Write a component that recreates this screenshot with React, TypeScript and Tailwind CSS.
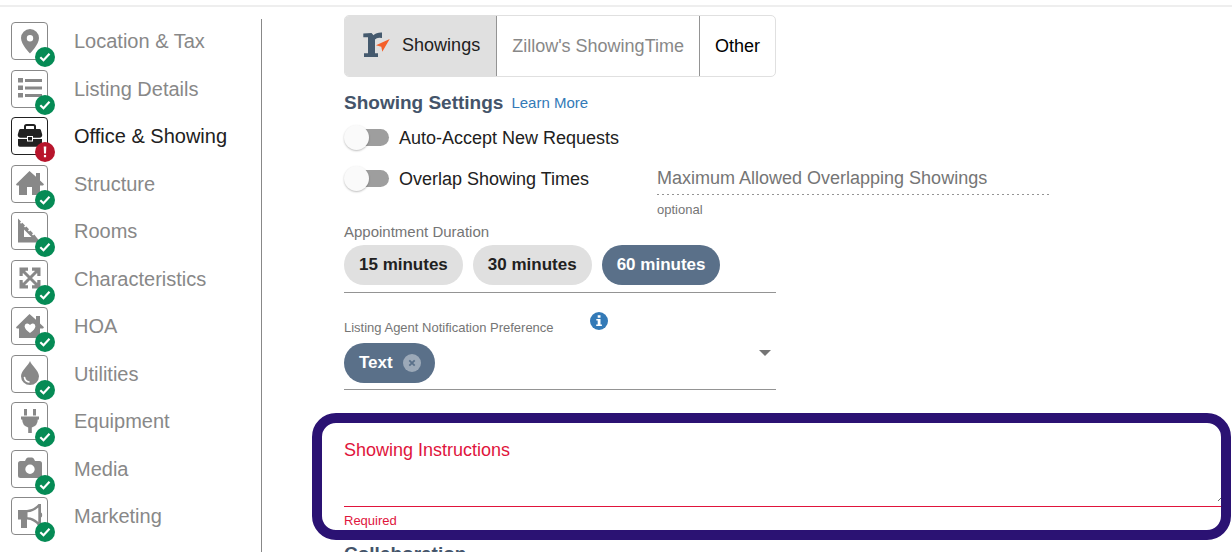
import { useState } from "react";
import type { ReactNode } from "react";

type Status = "done" | "error";

interface Section {
  label: string;
  status: Status;
  icon: ReactNode;
}

const sections: Section[] = [
  {
    label: "Location & Tax",
    status: "done",
    icon: (
      <path
        fillRule="evenodd"
        d="M18 6a9 9 0 0 0-9 9c0 6.5 9 15.5 9 15.5s9-9 9-15.5a9 9 0 0 0-9-9zm0 6a3.2 3.2 0 1 1 0 6.4 3.2 3.2 0 0 1 0-6.4z"
      />
    ),
  },
  {
    label: "Listing Details",
    status: "done",
    icon: (
      <path d="M6 7h5v4.5H6zM13 8h17v3H13zM6 14.5h5V19H6zM13 15.5h17v3H13zM6 22h5v4.5H6zM13 23h17v3H13z" />
    ),
  },
  {
    label: "Office & Showing",
    status: "error",
    icon: (
      <>
        <path d="M13 11V8.5Q13 7 14.5 7h7Q23 7 23 8.5V11" fill="none" stroke="currentColor" strokeWidth="2" />
        <path d="M8.5 11h19q1 0 1.4 1l1.3 4.5q.3 3-2.7 3.2H21V18h-6v1.700H8.500q-3-.2-2.700-3.200L7.100 12q.4-1 1.400-1z" />
        <path d="M16 19h4v3.500h-4z" />
        <path d="M6 21h9v2.500h6V21h9v6q0 1.700-1.700 1.700H7.700Q6 28.700 6 27z" />
      </>
    ),
  },
  {
    label: "Structure",
    status: "done",
    icon: <path d="M17.500 5L24 10.800V7h4v7.500l4 3.700-1 1.300h-3V29h-8v-8h-5v8H7v-9.500H4.800l-.8-1.300z" />,
  },
  {
    label: "Rooms",
    status: "done",
    icon: (
      <path
        fillRule="evenodd"
        d="M6 5.500l3 3-1 1.200 1 1 1.300-1 2.700 2.700-1 1.200 1 1 1.300-1 2.700 2.700-1 1.200 1 1 1.300-1 2.700 2.700-1 1.200 1 1 1.300-1L28.500 29.500H6zM12 16.500V24h7.500z"
      />
    ),
  },
  {
    label: "Characteristics",
    status: "done",
    icon: (
      <>
        <path d="M10 9l16 16M26 9L10 25" stroke="currentColor" strokeWidth="3" />
        <path d="M7.500 6.500H16v3.200h-2.500l-2.800 2.800V15H7.500zM28.500 6.500H20v3.200h2.500l2.800 2.800V15h3.200zM7.500 27.500H16v-3.200h-2.500l-2.800-2.800V19H7.500zM28.500 27.500H20v-3.200h2.500l2.800-2.800V19h3.200z" />
      </>
    ),
  },
  {
    label: "HOA",
    status: "done",
    icon: (
      <path
        fillRule="evenodd"
        d="M17.500 6L24 11.800V8h4v7.500l4 3.700-1 1.300h-3V30H7v-9.500H4.800l-.8-1.300zM18 17q-1.200-1.800-3.200-1.500-2.300.7-2.200 3Q13 21.500 18 25q5-3.500 5.400-6.500.1-2.300-2.200-3Q19.200 15.200 18 17z"
      />
    ),
  },
  {
    label: "Utilities",
    status: "done",
    icon: (
      <>
        <path d="M18 5c1 4 9 9.500 9 15.300a9 8.700 0 0 1-18 0C9 14.500 17 9 18 5z" />
        <path d="M12.500 21.500q.7 4 4.500 4.500" fill="none" stroke="white" strokeWidth="1.600" strokeLinecap="round" />
      </>
    ),
  },
  {
    label: "Equipment",
    status: "done",
    icon: (
      <path d="M12 6h3v6.500h-3zM21 6h3v6.500h-3zM9 13.500h18v3h-1.200q0 6.200-6 8V30h-3.600v-5.500q-6-1.800-6-8H9z" />
    ),
  },
  {
    label: "Media",
    status: "done",
    icon: (
      <path
        fillRule="evenodd"
        d="M8.500 10H13l1-2q.6-1.500 2-1.500h4q1.400 0 2 1.500l1 2h4.500q2.500 0 2.500 2.500v12q0 2.500-2.500 2.500h-19Q6 27 6 24.500v-12Q6 10 8.500 10zM18 13.500a4.700 4.700 0 1 0 0 9.400 4.700 4.700 0 0 0 0-9.400z"
      />
    ),
  },
  {
    label: "Marketing",
    status: "done",
    icon: (
      <path
        fillRule="evenodd"
        d="M6 12h9q7-.5 11.500-6H29v8.500q1.200.3 1.200 2.500T29 19.500V28h-2.500Q22 22 15 21.500V30H9v-8.500H6zM15.500 14.300v5Q21.500 19.500 26.300 24V9.500Q21.500 14 15.500 14.300z"
      />
    ),
  },
];

function StatusBadge({ status }: { status: Status }) {
  return (
    <svg
      viewBox="0 0 20 20"
      aria-hidden="true"
      className={
        status === "done"
          ? "absolute top-6 left-[23px] size-5 text-[#058b55]"
          : "absolute top-6 left-[23px] size-5 text-[#b8152c]"
      }
    >
      <circle cx="10" cy="10" r="10" fill="currentColor" />
      {status === "done" ? (
        <path d="M5.300 10.200l3.200 3 6-6.400" fill="none" stroke="white" strokeWidth="2.200" />
      ) : (
        <path d="M8.700 4.500h2.600L11 11.500H9zM8.900 13h2.200v2.200H8.900z" fill="white" />
      )}
    </svg>
  );
}

function SectionLink({ section, active }: { section: Section; active: boolean }) {
  return (
    <li className="odd:h-12 even:h-[47px]">
      <a
        href="#"
        aria-current={active ? "page" : undefined}
        className={
          active
            ? "flex items-center gap-[26px] text-xl text-[#212121]"
            : "flex items-center gap-[26px] text-xl text-[#888888]"
        }
      >
        <span className="relative h-[38px] w-[37px] shrink-0 rounded border border-current">
          <svg viewBox="0 0 35 36" fill="currentColor" aria-hidden="true" className="h-9 w-[35px]">
            {section.icon}
          </svg>
          <StatusBadge status={section.status} />
        </span>
        {section.label}
      </a>
    </li>
  );
}

function ShowingsLogo() {
  return (
    <svg viewBox="0 0 30 28" aria-hidden="true" className="h-7 w-[30px]">
      <path
        d="M1.300 2.500L9.500 2l2 2.200Q14.500 1.200 20 1.500V7q-5-1.200-7 1.500v13.800h3V26H2v-3.700h4V6.300H1.300z"
        fill="#455a6e"
      />
      <path d="M27.700 8L14 14.300l5.300 1.400 1 5z" fill="#f4602a" />
    </svg>
  );
}

function Toggle({ id, label }: { id: string; label: string }) {
  return (
    <div className="flex h-[41px] items-center gap-2.5">
      <input
        id={id}
        type="checkbox"
        role="switch"
        className="relative ml-1.5 h-[17px] w-[39px] shrink-0 appearance-none rounded-full bg-[#9e9e9e] before:absolute before:-top-1 before:-left-1.5 before:size-[25px] before:rounded-full before:bg-[#fafafa] before:shadow-[0_1px_2px_rgba(0,0,0,0.25)] checked:bg-[#58708a] checked:before:left-5"
      />
      <label htmlFor={id} className="text-lg text-[#212121]">
        {label}
      </label>
    </div>
  );
}

function DurationPicker() {
  const [value, setValue] = useState("60");
  return (
    <fieldset className="w-[432px] max-w-full border-b border-[#949494] pb-[7px]">
      <legend className="h-5 text-[15px] leading-[22px] text-[#757575]">Appointment Duration</legend>
      <div className="mt-1 flex gap-2.5">
        {["15", "30", "60"].map((minutes) => (
          <label
            key={minutes}
            className="relative flex h-10 items-center rounded-full bg-[#e0e0e0] px-[15px] text-[17px] font-bold text-[#212121] has-checked:bg-[#5a7089] has-checked:text-white"
          >
            <input
              type="radio"
              name="duration"
              value={minutes}
              checked={value === minutes}
              onChange={() => setValue(minutes)}
              className="sr-only"
            />
            {minutes} minutes
          </label>
        ))}
      </div>
    </fieldset>
  );
}

function NotificationPreference() {
  return (
    <div className="mt-[19px] w-[432px] max-w-full border-b border-[#949494] pb-1.5">
      <div className="flex items-start gap-9">
        <label htmlFor="notify" className="pt-1.5 text-[13px] leading-5 text-[#757575]">
          Listing Agent Notification Preference
        </label>
        <button type="button" aria-label="About notification preference" className="size-[18px]">
          <svg viewBox="0 0 18 18" aria-hidden="true">
            <circle cx="9" cy="9" r="9" fill="#337ab7" />
            <path d="M7.700 3.300h2.800v2.400H7.700zM6.300 7h4.200v5.500h1.400V14H6.200v-1.500h1.500v-4H6.300z" fill="white" />
          </svg>
        </button>
      </div>
      <div className="mt-[5px] flex">
        <span className="flex h-10 items-center gap-2.5 rounded-full bg-[#5a7089] pr-3.5 pl-[15px] text-[17px] font-bold text-white">
          Text
          <button type="button" aria-label="Remove Text" className="size-[18px]">
            <svg viewBox="0 0 18 18" aria-hidden="true">
              <circle cx="9" cy="9" r="9" fill="#9ca9b8" />
              <path d="M6.300 6.300l5.400 5.400M11.700 6.300l-5.400 5.400" stroke="#5a7089" strokeWidth="1.800" />
            </svg>
          </button>
        </span>
        <div className="relative flex-1">
          <select id="notify" className="h-10 w-full appearance-none bg-transparent" defaultValue="">
            <option value="" />
          </select>
          <svg
            viewBox="0 0 12 6"
            aria-hidden="true"
            className="pointer-events-none absolute top-[7px] right-[5px] h-1.5 w-3"
          >
            <path d="M0 0h12L6 6z" fill="#757575" />
          </svg>
        </div>
      </div>
    </div>
  );
}

export default function App() {
  return (
    <div className="flex h-screen flex-col overflow-hidden bg-white font-['Liberation_Sans',Arial,sans-serif]">
      <header className="h-[7px] shrink-0 border-b-2 border-[#eeeeee]" />
      <div className="flex min-h-0 flex-1">
        <nav
          aria-label="Listing sections"
          className="mt-3 w-[262px] shrink-0 overflow-hidden border-r border-[#888888] pt-[3px] pl-[11px]"
        >
          <ul>
            {sections.map((section) => (
              <SectionLink key={section.label} section={section} active={section.status === "error"} />
            ))}
          </ul>
        </nav>

        <main className="min-w-0 flex-1 overflow-hidden pt-2 pl-[50px]">
          <div className="pl-8">
            <div className="flex h-[62px] w-[432px] max-w-full overflow-hidden rounded-[5px] border border-[#e0e0e0] text-lg">
              <button
                type="button"
                className="flex flex-1 items-center justify-end gap-2.5 bg-[#e0e0e0] pr-4 pb-0.5 text-[#212121]"
              >
                <ShowingsLogo />
                Showings
              </button>
              <button type="button" className="border-l border-[#949494] px-[15px] text-[#888888]">
                Zillow's ShowingTime
              </button>
              <button type="button" className="border-l border-[#949494] px-[15px] text-black">
                Other
              </button>
            </div>

            <div className="mt-3 flex h-7 items-center gap-2">
              <h2 className="text-[19px] font-bold text-[#44546a]">Showing Settings</h2>
              <a href="#" className="text-[15px] text-[#337ab7]">
                Learn More
              </a>
            </div>

            <Toggle id="auto-accept" label="Auto-Accept New Requests" />
            <div className="flex items-start pb-px">
              <div className="w-[313px] shrink-0">
                <Toggle id="overlap" label="Overlap Showing Times" />
              </div>
              <div className="w-[392px]">
                <input
                  type="text"
                  aria-label="Maximum Allowed Overlapping Showings"
                  aria-describedby="overlap-hint"
                  placeholder="Maximum Allowed Overlapping Showings"
                  className="block h-[37px] w-full bg-[repeating-linear-gradient(90deg,#949494_0_2px,transparent_2px_5px)] bg-[length:100%_1px] bg-bottom bg-no-repeat pt-1 text-lg placeholder:text-[#757575]"
                />
                <p id="overlap-hint" className="mt-[5px] text-[13px] leading-5 text-[#757575]">
                  optional
                </p>
              </div>
            </div>

            <DurationPicker />
            <NotificationPreference />
          </div>

          <section className="mt-[23px] mr-px overflow-hidden rounded-3xl border-10 border-[#2b1273] pt-[15px] pl-[22px] text-[#e0143c]">
            <label htmlFor="instructions" className="block text-lg leading-6">
              Showing Instructions
            </label>
            <div className="border-b border-[#e0143c] pb-1">
              <textarea
                id="instructions"
                required
                aria-describedby="instructions-error"
                className="block h-10 w-[calc(100%+5px)] outline-none"
              />
            </div>
            <p id="instructions-error" className="mt-1 h-[19px] text-[13px] leading-5">
              Required
            </p>
          </section>

          <h2 className="pl-8 text-[19px] leading-7 font-bold text-[#44546a]">Collaboration</h2>
        </main>
      </div>
    </div>
  );
}
